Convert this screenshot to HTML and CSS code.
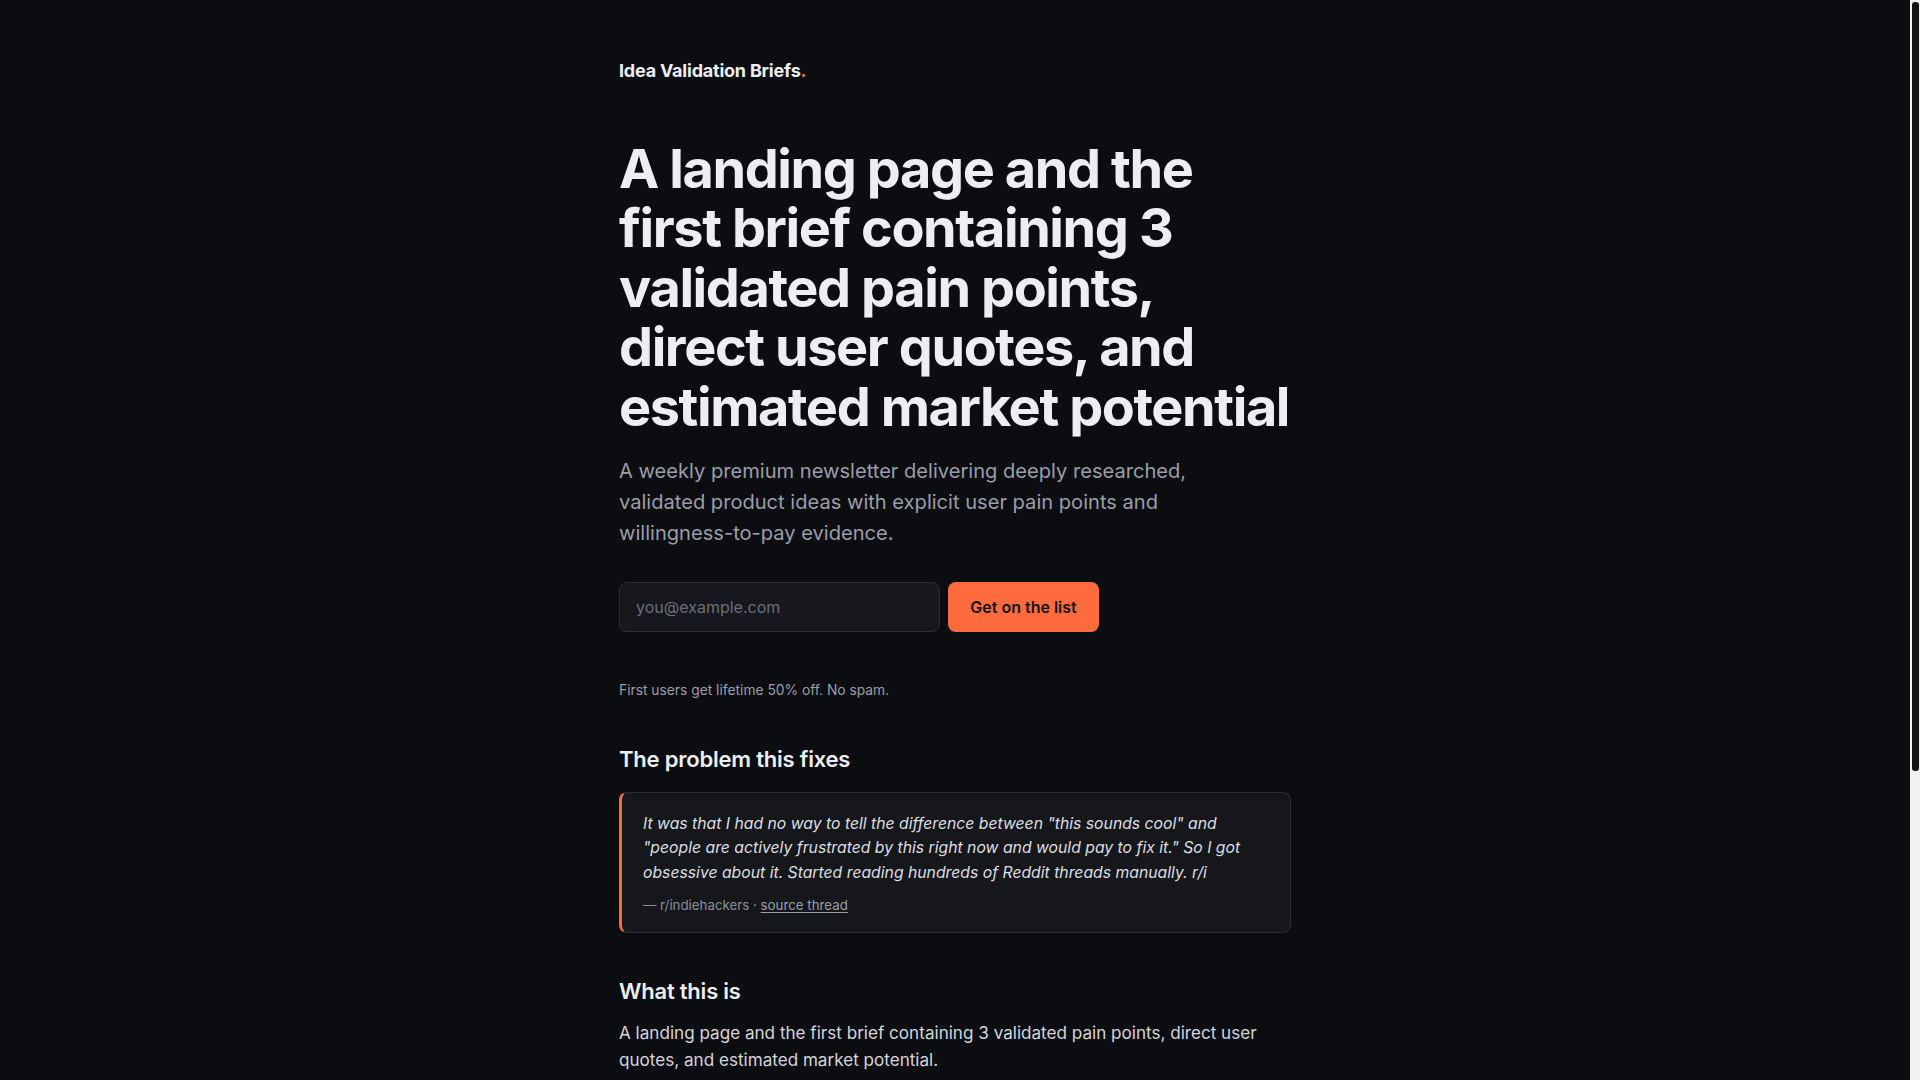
FILE: index.html
```html
<!DOCTYPE html>
<html lang="en">
<head>
<meta charset="utf-8">
<title>Idea Validation Briefs</title>
<link rel="stylesheet" href="styles.css">
</head>
<body>
<main class="page">
  <header class="brand">Idea Validation Briefs<span class="dot">.</span></header>

  <h1 class="hero-title">A landing page and the first brief containing 3 validated pain points, direct user quotes, and estimated market potential</h1>
  <p class="hero-sub">A weekly premium newsletter delivering deeply researched, validated product ideas with explicit user pain points and willingness-to-pay evidence.</p>

  <form class="signup">
    <input class="email" type="email" placeholder="you@example.com">
    <button class="cta" type="button">Get on the list</button>
  </form>
  <div class="form-msg"></div>
  <p class="fineprint">First users get lifetime 50% off. No spam.</p>

  <section class="section">
    <h2 class="section-title">The problem this fixes</h2>
    <blockquote class="quote">
      <p class="quote-text">It was that I had no way to tell the difference between "this sounds cool" and "people are actively frustrated by this right now and would pay to fix it." So I got obsessive about it. Started reading hundreds of Reddit threads manually. r/i</p>
      <p class="quote-src">— r/indiehackers · <a class="src-link" href="#">source thread</a></p>
    </blockquote>
  </section>

  <section class="section">
    <h2 class="section-title">What this is</h2>
    <p class="body-text">A landing page and the first brief containing 3 validated pain points, direct user quotes, and estimated market potential.</p>
  </section>

  <section class="section">
    <h2 class="section-title">What you get each week</h2>
    <ul class="list">
      <li>3 validated pain points pulled from real user conversations</li>
      <li>Direct user quotes with links to the original threads</li>
      <li>Willingness-to-pay evidence and estimated market potential</li>
    </ul>
  </section>

  <footer class="footer">© Idea Validation Briefs</footer>
</main>
<div class="scrollbar" aria-hidden="true"><div class="scrollbar-thumb"></div></div>
</body>
</html>
```

FILE: styles.css
```css
html {
  background: #0c0d11;
}
body {
  margin: 0;
  padding-right: 10px;
  background: #0c0d11;
  color: #e6e7eb;
  font-family: Inter, "Noto Sans", "Liberation Sans", sans-serif;
}
.page {
  max-width: 672px;
  margin: 0 auto;
  padding: 58px 0 120px;
}
.brand {
  font-size: 18px;
  font-weight: 700;
  line-height: 26px;
  letter-spacing: -0.012em;
  color: #eceef2;
}
.dot {
  color: #ff6b3d;
}
.hero-title {
  margin: 55px 0 0;
  font-size: 54px;
  line-height: 1.1;
  font-weight: 700;
  letter-spacing: -0.026em;
  color: #eceef2;
}
.hero-sub {
  margin: 20px 0 0;
  max-width: 580px;
  font-size: 20.1px;
  line-height: 31px;
  color: #9a9ea8;
}
.signup {
  display: flex;
  gap: 8px;
  margin-top: 33px;
}
.email {
  box-sizing: border-box;
  width: 321px;
  height: 50px;
  padding: 0 16px;
  background: #16181d;
  border: 1px solid #2a2d33;
  border-radius: 8px;
  color: #e6e7eb;
  font-family: inherit;
  font-size: 16px;
  outline: none;
}
.email::placeholder {
  color: #6b6f78;
}
.cta {
  box-sizing: border-box;
  width: 151px;
  height: 50px;
  border: 0;
  border-radius: 8px;
  background: #ff6b3d;
  color: #121212;
  font-family: inherit;
  font-size: 16px;
  font-weight: 600;
  cursor: pointer;
}
.form-msg {
  height: 28px;
}
.fineprint {
  margin: 20px 0 0;
  font-size: 13.8px;
  line-height: 20px;
  color: #9a9ea8;
}
.section {
  margin-top: 44px;
}
.section-title {
  margin: 0;
  font-size: 22px;
  line-height: 30px;
  font-weight: 600;
  letter-spacing: -0.01em;
  color: #eceef2;
}
.quote {
  margin: 18px 0 0;
  padding: 19px 24px 17px 21px;
  background: #15171b;
  border: 1px solid #2a2d33;
  border-left: 3px solid #ff6b3d;
  border-radius: 8px;
}
.quote-text {
  margin: 0;
  font-size: 15.75px;
  line-height: 24.5px;
  font-style: italic;
  color: #dcdee3;
}
.quote-src {
  margin: 10px 0 0;
  font-size: 13.3px;
  line-height: 20px;
  color: #8b8f99;
}
.src-link {
  color: #9a9ea8;
  text-decoration: underline;
  text-underline-offset: 2px;
}
.section + .section {
  margin-top: 43px;
}
.body-text {
  margin: 13px 0 0;
  font-size: 17.1px;
  line-height: 27px;
  color: #d4d6db;
}
.list {
  margin: 12px 0 0;
  padding-left: 20px;
  font-size: 17px;
  line-height: 30px;
  color: #d4d6db;
}
.footer {
  margin-top: 80px;
  font-size: 13px;
  color: #6b6f78;
}
.scrollbar {
  position: fixed;
  top: 0;
  right: 0;
  width: 10px;
  height: 100vh;
  background: #f1f1f1;
}
.scrollbar-thumb {
  margin: 2px 1px 0 2px;
  height: 769px;
  background: #151515;
  border-radius: 3px;
}
```
